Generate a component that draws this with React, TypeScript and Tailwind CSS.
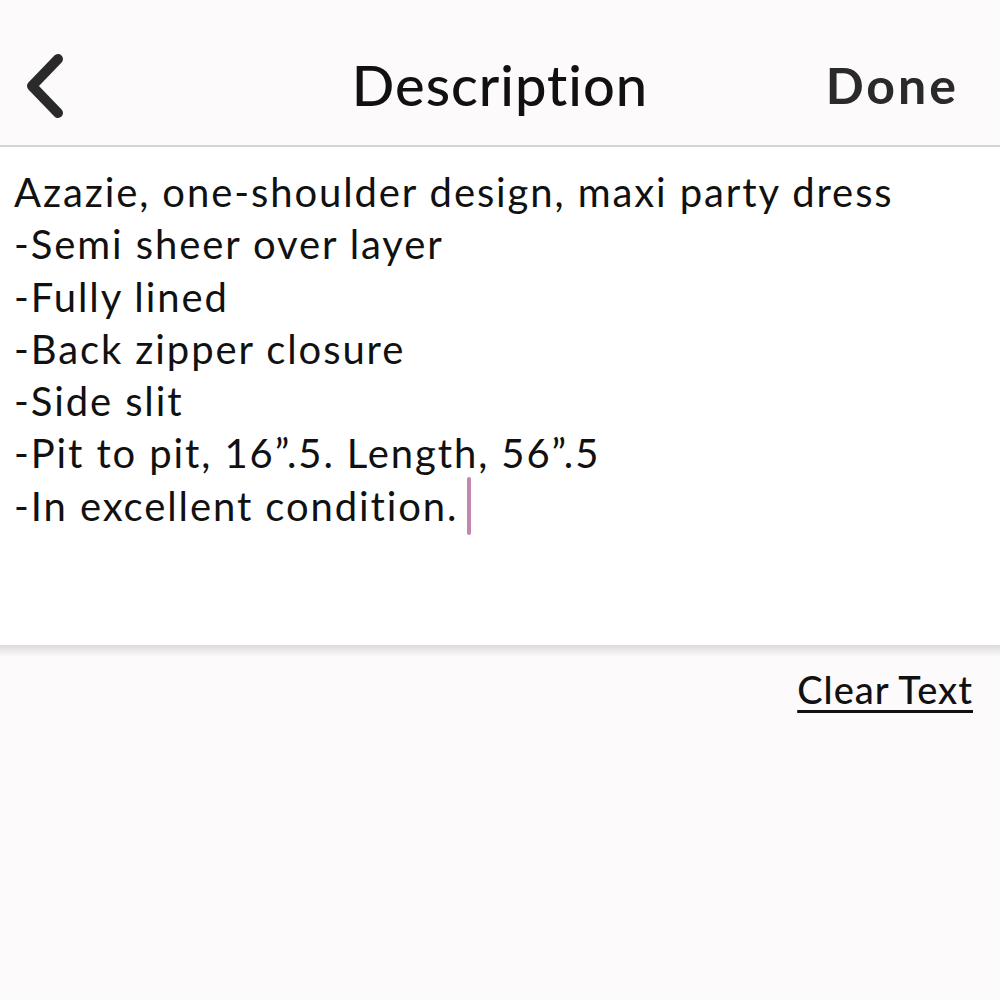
import React from "react";

const LINES = [
  "Azazie, one-shoulder design, maxi party dress",
  "-Semi sheer over layer",
  "-Fully lined",
  "-Back zipper closure",
  "-Side slit",
  "-Pit to pit, 16\u201d.5. Length, 56\u201d.5",
];

export default function App() {
  return (
    <div className="flex h-[1000px] w-[1000px] flex-col bg-[#fcfafb] font-['Lato','Noto_Sans',sans-serif] text-[#111]">
      <header className="relative flex h-[147px] items-center justify-between border-b-2 border-[#d4d2d3] px-[24px] pt-[26px]">
        <button aria-label="Back" className="flex h-[70px] w-[50px] items-center">
          <svg viewBox="0 0 44 70" className="h-[70px] w-[44px]">
            <path
              d="M34 8 L8 35 L34 62"
              fill="none"
              stroke="#2a2a2a"
              strokeWidth="10"
              strokeLinecap="round"
              strokeLinejoin="round"
            />
          </svg>
        </button>
        <h1 className="absolute left-1/2 top-[50px] -translate-x-1/2 text-[56px] leading-[70px] font-medium tracking-[1px]">
          Description
        </h1>
        <button className="pr-[17px] text-[50px] font-bold tracking-[3px] text-[#2a2a2a]">Done</button>
      </header>

      <section className="h-[498px] bg-white px-[14px]">
        <div className="pt-[19px] text-[40px] leading-[52.3px] tracking-[1.9px]">
          {LINES.map((l) => (
            <p key={l} className="whitespace-pre">{l}</p>
          ))}
          <p className="flex h-[52.3px] items-center whitespace-pre">
            -In excellent condition.{" "}
            <span className="-ml-[4px] inline-block h-[58px] w-[4px] shrink-0 rounded-full bg-[#c087b0]" />
          </p>
        </div>
      </section>

      <div className="h-[12px] bg-gradient-to-b from-[#dcdadb] to-[#fcfafb]" />
      <div className="flex justify-end px-[27px] pt-[4px]">
        <button className="text-[38px] font-medium tracking-[1px] underline decoration-[3px] underline-offset-[6px]">
          Clear Text
        </button>
      </div>
    </div>
  );
}
